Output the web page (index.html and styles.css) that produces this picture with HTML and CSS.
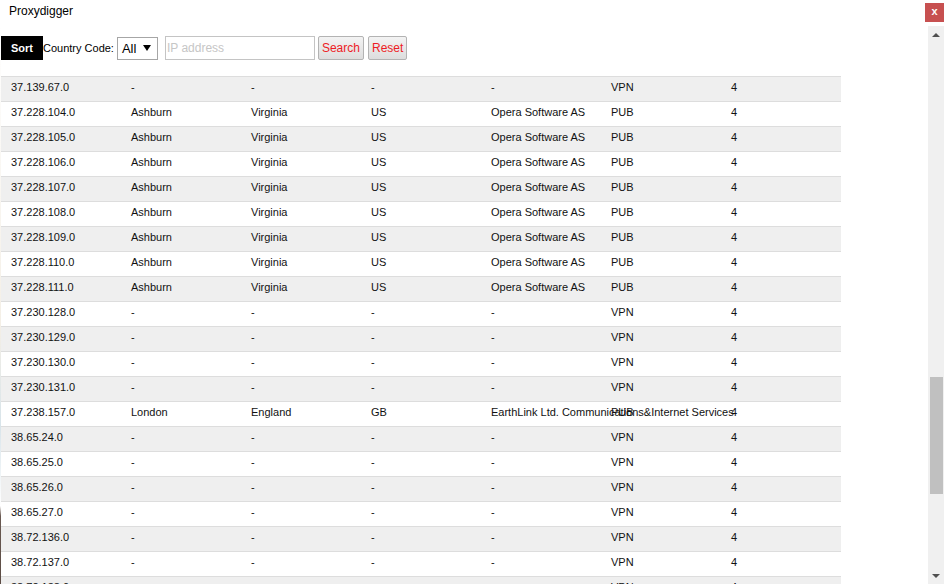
FILE: index.html
```html
<!DOCTYPE html>
<html>
<head>
<meta charset="utf-8">
<title>Proxydigger</title>
<link rel="stylesheet" href="styles.css">
</head>
<body>
<div class="window">
  <div class="titlebar">
    <div class="title">Proxydigger</div>
    <div class="close">x</div>
  </div>
  <div class="main">
    <div class="strip"></div>
    <div class="content">
      <div class="toolbar">
        <div class="sort">Sort</div>
        <span class="label">Country Code:</span>
        <div class="select"><span>All</span><svg width="8" height="6" viewBox="0 0 8 6"><path d="M0 0H8L4 6Z" fill="#000"/></svg></div>
        <input class="ip" type="text" placeholder="IP address">
        <button class="btn">Search</button>
        <button class="btn btn-reset">Reset</button>
      </div>
      <div class="table">
        <div class="row alt"><span>37.139.67.0</span><span>-</span><span>-</span><span>-</span><span>-</span><span>VPN</span><span>4</span></div>
        <div class="row"><span>37.228.104.0</span><span>Ashburn</span><span>Virginia</span><span>US</span><span>Opera Software AS</span><span>PUB</span><span>4</span></div>
        <div class="row alt"><span>37.228.105.0</span><span>Ashburn</span><span>Virginia</span><span>US</span><span>Opera Software AS</span><span>PUB</span><span>4</span></div>
        <div class="row"><span>37.228.106.0</span><span>Ashburn</span><span>Virginia</span><span>US</span><span>Opera Software AS</span><span>PUB</span><span>4</span></div>
        <div class="row alt"><span>37.228.107.0</span><span>Ashburn</span><span>Virginia</span><span>US</span><span>Opera Software AS</span><span>PUB</span><span>4</span></div>
        <div class="row"><span>37.228.108.0</span><span>Ashburn</span><span>Virginia</span><span>US</span><span>Opera Software AS</span><span>PUB</span><span>4</span></div>
        <div class="row alt"><span>37.228.109.0</span><span>Ashburn</span><span>Virginia</span><span>US</span><span>Opera Software AS</span><span>PUB</span><span>4</span></div>
        <div class="row"><span>37.228.110.0</span><span>Ashburn</span><span>Virginia</span><span>US</span><span>Opera Software AS</span><span>PUB</span><span>4</span></div>
        <div class="row alt"><span>37.228.111.0</span><span>Ashburn</span><span>Virginia</span><span>US</span><span>Opera Software AS</span><span>PUB</span><span>4</span></div>
        <div class="row"><span>37.230.128.0</span><span>-</span><span>-</span><span>-</span><span>-</span><span>VPN</span><span>4</span></div>
        <div class="row alt"><span>37.230.129.0</span><span>-</span><span>-</span><span>-</span><span>-</span><span>VPN</span><span>4</span></div>
        <div class="row"><span>37.230.130.0</span><span>-</span><span>-</span><span>-</span><span>-</span><span>VPN</span><span>4</span></div>
        <div class="row alt"><span>37.230.131.0</span><span>-</span><span>-</span><span>-</span><span>-</span><span>VPN</span><span>4</span></div>
        <div class="row"><span>37.238.157.0</span><span>London</span><span>England</span><span>GB</span><span>EarthLink Ltd. Communications&amp;Internet Services</span><span>PUB</span><span>4</span></div>
        <div class="row alt"><span>38.65.24.0</span><span>-</span><span>-</span><span>-</span><span>-</span><span>VPN</span><span>4</span></div>
        <div class="row"><span>38.65.25.0</span><span>-</span><span>-</span><span>-</span><span>-</span><span>VPN</span><span>4</span></div>
        <div class="row alt"><span>38.65.26.0</span><span>-</span><span>-</span><span>-</span><span>-</span><span>VPN</span><span>4</span></div>
        <div class="row"><span>38.65.27.0</span><span>-</span><span>-</span><span>-</span><span>-</span><span>VPN</span><span>4</span></div>
        <div class="row alt"><span>38.72.136.0</span><span>-</span><span>-</span><span>-</span><span>-</span><span>VPN</span><span>4</span></div>
        <div class="row"><span>38.72.137.0</span><span>-</span><span>-</span><span>-</span><span>-</span><span>VPN</span><span>4</span></div>
        <div class="row alt"><span>38.72.138.0</span><span>-</span><span>-</span><span>-</span><span>-</span><span>VPN</span><span>4</span></div>
      </div>
    </div>
    <div class="scrollbar">
      <div class="arrow"><svg width="8" height="4" viewBox="0 0 8 4"><path d="M0 4H8L4 0Z" fill="#505050"/></svg></div>
      <div class="track"><div class="thumb"></div></div>
      <div class="arrow"><svg width="8" height="4" viewBox="0 0 8 4"><path d="M0 0H8L4 4Z" fill="#505050"/></svg></div>
    </div>
  </div>
</div>
</body>
</html>
```

FILE: styles.css
```css
* { box-sizing: border-box; }
html, body {
  margin: 0;
  padding: 0;
  width: 944px;
  height: 584px;
  overflow: hidden;
  background: #fff;
  font-family: "Liberation Sans", Arial, sans-serif;
  color: #000;
}
.window {
  display: flex;
  flex-direction: column;
  height: 584px;
}
.titlebar {
  height: 26px;
  flex: none;
  display: flex;
  justify-content: space-between;
  align-items: flex-start;
}
.title {
  font-size: 12px;
  padding: 4px 0 0 9px;
  line-height: 15px;
}
.close {
  width: 19px;
  height: 19px;
  margin-top: 3px;
  background: #c75050;
  color: #fff;
  font-weight: bold;
  font-size: 11px;
  line-height: 17px;
  text-align: center;
}
.main {
  flex: 1;
  display: flex;
  min-height: 0;
}
.strip {
  width: 1px;
  flex: none;
  background: linear-gradient(to bottom, #ffffff 0, #f4efe6 300px, #d8e4ea 400px, #ffffff 480px, #6a5a52 490px, #5c4c45 100%);
}
.content {
  flex: 1;
  overflow: hidden;
  padding-top: 10px;
}
.toolbar {
  display: flex;
  align-items: center;
  height: 24px;
  font-size: 11px;
}
.sort {
  width: 42px;
  height: 24px;
  background: #000;
  color: #fff;
  font-weight: bold;
  font-size: 11px;
  line-height: 24px;
  text-align: center;
}
.label {
  font-size: 11px;
}
.select {
  margin-left: 3px;
  width: 41px;
  height: 23px;
  border: 1px solid #a6a6a6;
  display: flex;
  align-items: center;
  justify-content: space-between;
  padding: 0 6px 0 4px;
  font-size: 13px;
  background: #fff;
}
.ip {
  margin-left: 7px;
  width: 150px;
  height: 24px;
  border: 1px solid #c4c4c4;
  padding: 0 1px;
  font-family: "Liberation Sans", Arial, sans-serif;
  font-size: 12px;
  outline: none;
}
.ip::placeholder { color: #c6c6c6; }
.btn {
  margin-left: 3px;
  height: 24px;
  padding: 0 3px;
  border: 1px solid #b3b3b3;
  border-radius: 2px;
  background: linear-gradient(#f3f3f3, #dddddd);
  color: #ee1c25;
  font-family: "Liberation Sans", Arial, sans-serif;
  font-size: 12px;
}
.btn-reset { margin-left: 4px; }
.table {
  margin-top: 16px;
  width: 840px;
  border-top: 1px solid #dddddd;
}
.row {
  display: grid;
  grid-template-columns: repeat(7, 120px);
  height: 25px;
  padding-bottom: 4px;
  border-bottom: 1px solid #dddddd;
  align-items: center;
  font-size: 11px;
  color: #111;
}
.row.alt { background: #efefef; }
.row span {
  padding-left: 10px;
  white-space: nowrap;
  min-width: 0;
  overflow: visible;
}
.scrollbar {
  width: 16px;
  flex: none;
  background: #f0f0f0;
  display: flex;
  flex-direction: column;
}
.arrow {
  height: 17px;
  flex: none;
  display: flex;
  align-items: center;
  justify-content: center;
}
.track {
  flex: 1;
  padding-left: 2px;
  padding-right: 1px;
}
.thumb {
  margin-top: 334px;
  height: 117px;
  background: #c0c0c0;
}
```
